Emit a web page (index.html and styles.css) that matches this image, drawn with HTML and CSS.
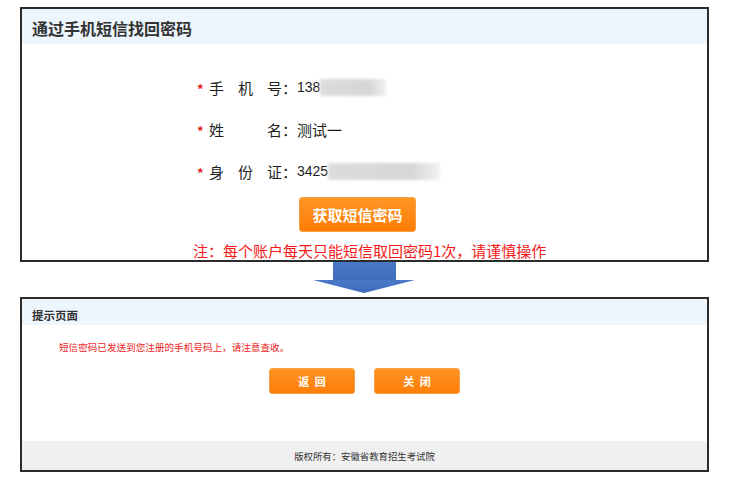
FILE: index.html
```html
<!DOCTYPE html>
<html lang="zh-CN">
<head>
<meta charset="utf-8">
<title>通过手机短信找回密码</title>
<link rel="stylesheet" href="styles.css">
</head>
<body>
<div class="page">
  <section class="panel panel-top">
    <div class="panel-head head-lg">通过手机短信找回密码</div>
    <div class="form">
      <div class="row">
        <span class="star">*</span>
        <span class="label"><span>手</span><span>机</span><span>号</span></span><span class="colon">：</span>
        <span class="value">138</span><span class="blur b1"></span>
      </div>
      <div class="row">
        <span class="star">*</span>
        <span class="label"><span>姓</span><span></span><span>名</span></span><span class="colon">：</span>
        <span class="value-cn">测试一</span>
      </div>
      <div class="row">
        <span class="star">*</span>
        <span class="label"><span>身</span><span>份</span><span>证</span></span><span class="colon">：</span>
        <span class="value">3425</span><span class="blur b2"></span>
      </div>
      <div class="btn-line"><button class="btn btn-lg">获取短信密码</button></div>
      <div class="note">注：每个账户每天只能短信取回密码1次，请谨慎操作</div>
    </div>
  </section>

  <div class="arrow-gap">
    <svg class="arrow" width="102" height="35" viewBox="0 0 102 35">
      <defs>
        <linearGradient id="ag" x1="0" y1="0" x2="0" y2="1">
          <stop offset="0" stop-color="#4a78c8"/>
          <stop offset="1" stop-color="#3f6bbd"/>
        </linearGradient>
      </defs>
      <rect x="20" y="0" width="63" height="19" fill="url(#ag)"/>
      <polygon points="0,18 102,18 51,31" fill="url(#ag)"/>
    </svg>
  </div>

  <section class="panel panel-bottom">
    <div class="panel-head head-sm">提示页面</div>
    <div class="msg">短信密码已发送到您注册的手机号码上，请注意查收。</div>
    <div class="btns">
      <button class="btn btn-sm">返 回</button>
      <button class="btn btn-sm">关 闭</button>
    </div>
    <div class="footer">版权所有：安徽省教育招生考试院</div>
  </section>
</div>
</body>
</html>
```

FILE: styles.css
```css
* { box-sizing: border-box; }
html, body { margin: 0; padding: 0; background: #fff; }
body {
  font-family: "Noto Sans CJK SC", "Liberation Sans", sans-serif;
  color: #222;
}
.page { padding: 7px 0 0 20px; width: 741px; }

.panel {
  width: 689px;
  border: 2px solid #2b2b2b;
  background: #fff;
  overflow: hidden;
}
.panel-top { height: 255px; }
.panel-bottom { height: 175px; display: flex; flex-direction: column; }

.panel-head {
  background: #edf5fd;
  padding-left: 10px;
  font-weight: bold;
  color: #333;
  display: flex;
  align-items: center;
}
.head-lg { height: 35px; font-size: 16px; padding-top: 2px; }
.head-sm { height: 26px; font-size: 11.5px; padding-top: 6px; }

.form { padding-top: 22px; }
.row {
  height: 42px;
  display: flex;
  align-items: center;
  padding-left: 175px;
  font-size: 15px;
  color: #1e1e1e;
}
.star {
  width: 12px;
  color: #e41c1c;
  font-size: 13px;
  font-weight: bold;
  line-height: 1;
  margin-top: 2px;
}
.label { display: grid; grid-template-columns: 29px 29px 15px; }
.colon { width: 15px; }
.value { font-family: "Liberation Sans", "Noto Sans CJK SC", sans-serif; font-size: 14px; }
.blur {
  display: inline-block;
  height: 17px;
  background: linear-gradient(to right, #dcdcdc, #d6d6d6 75%, #f2f2f2);
  filter: blur(1.5px);
}
.b1 { width: 66px; }
.b2 { width: 112px; }

.btn-line { padding-left: 277px; margin-top: 5px; }
.btn {
  border: 1px solid #f5a14a;
  border-radius: 3px;
  background: linear-gradient(#ff9526, #ff7d06);
  color: #fff;
  font-family: "Noto Sans CJK SC", sans-serif;
  font-weight: bold;
  cursor: pointer;
  padding: 0;
}
.btn-lg { width: 117px; height: 35px; font-size: 15px; }
.note {
  margin-top: 9px;
  padding-left: 171px;
  font-size: 15px;
  line-height: 20px;
  color: #f41818;
}

.arrow-gap { height: 35px; }
.arrow { display: block; margin-left: 293px; }

.msg {
  margin-top: 15px;
  padding-left: 37px;
  font-size: 9.6px;
  line-height: 14px;
  color: #ee1c1c;
}
.btns {
  display: flex;
  justify-content: center;
  gap: 19px;
  margin-top: 14px;
}
.btn-sm { width: 86px; height: 26px; font-size: 11px; word-spacing: 3px; }
.footer {
  margin-top: auto;
  height: 29px;
  background: #f0f0f0;
  font-size: 9.4px;
  color: #333;
  display: flex;
  align-items: center;
  justify-content: center;
}
```
